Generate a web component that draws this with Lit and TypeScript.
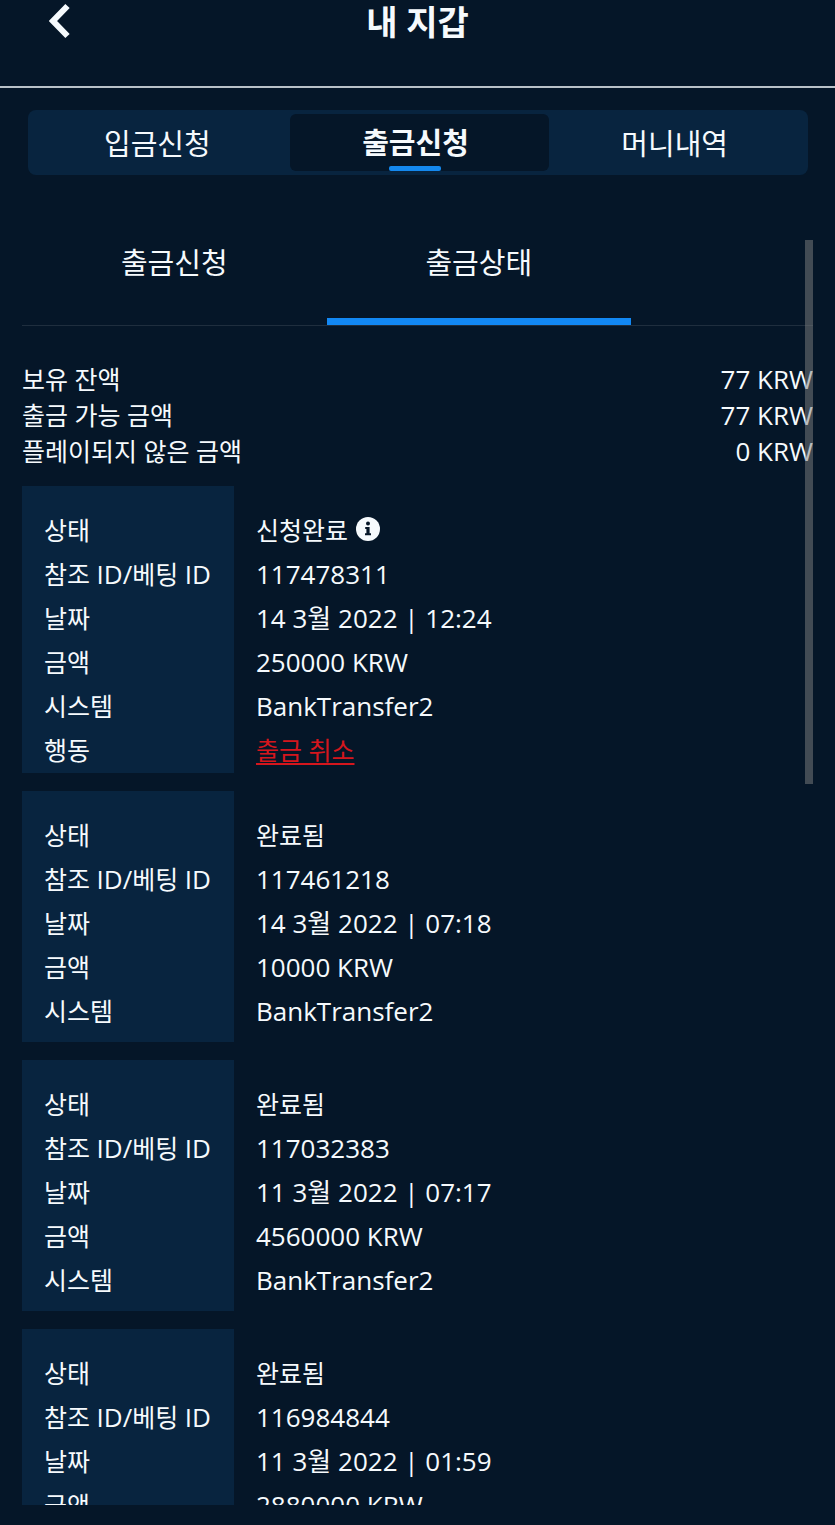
import { LitElement, html, css, svg, nothing } from "lit";
import { customElement, property, state } from "lit/decorators.js";
import { classMap } from "lit/directives/class-map.js";

interface Withdrawal {
  id: string;
  status: string;
  date: string;
  amount: string;
  system?: string;
  cancellable?: boolean;
}

const WITHDRAWALS: Withdrawal[] = [
  { id: "117478311", status: "신청완료", date: "14 3월 2022 | 12:24", amount: "250000 KRW", system: "BankTransfer2", cancellable: true },
  { id: "117461218", status: "완료됨", date: "14 3월 2022 | 07:18", amount: "10000 KRW", system: "BankTransfer2" },
  { id: "117032383", status: "완료됨", date: "11 3월 2022 | 07:17", amount: "4560000 KRW", system: "BankTransfer2" },
  { id: "116984844", status: "완료됨", date: "11 3월 2022 | 01:59", amount: "2880000 KRW" },
];

const BALANCES = [
  { label: "보유 잔액", value: "77 KRW" },
  { label: "출금 가능 금액", value: "77 KRW" },
  { label: "플레이되지 않은 금액", value: "0 KRW" },
];

const infoIcon = svg`
  <svg class="icon" viewBox="0 0 24 24" aria-hidden="true">
    <circle cx="12" cy="12" r="12" fill="currentColor"></circle>
    <g fill="#051628">
      <circle cx="12" cy="6.6" r="2"></circle>
      <path d="M9.2 10h4.4v6.2h1.4v2H9v-2h1.4V12H9.2z"></path>
    </g>
  </svg>`;

@customElement("withdrawal-record")
export class WithdrawalRecord extends LitElement {
  @property({ attribute: false }) record!: Withdrawal;

  static styles = css`
    :host {
      display: block;
    }
    .record {
      --label-width: 212px;
      display: grid;
      grid-template-columns: var(--label-width) 1fr;
      grid-auto-rows: 44px;
      align-items: center;
      margin: 0;
      padding: 22px 0 9px;
      line-height: 44px;
      background: linear-gradient(to right, #08243f var(--label-width), transparent var(--label-width));
    }
    .record.open {
      padding-bottom: 1px;
    }
    .label {
      padding-left: 22px;
      white-space: nowrap;
      font-size: 25px;
    }
    .latin {
      font-size: 26px;
    }
    .value {
      margin: 0;
      padding-left: 22px;
    }
    .status {
      display: flex;
      align-items: center;
      gap: 8px;
      font-size: 25px;
    }
    .info {
      display: flex;
      padding: 0 0 3px;
      border: 0;
      background: none;
      color: inherit;
      cursor: pointer;
    }
    .icon {
      width: 24px;
      height: 24px;
    }
    .cancel {
      font-size: 25px;
      color: #d5161d;
      text-decoration-thickness: 2px;
      text-underline-offset: 3px;
    }
  `;

  render() {
    const r = this.record;
    return html`
      <dl class=${classMap({ record: true, open: !!r.cancellable })}>
        <dt class="label">상태</dt>
        <dd class="value status">
          <span>${r.status}</span>
          ${r.cancellable
            ? html`<button class="info" type="button" aria-label="상태 정보">${infoIcon}</button>`
            : nothing}
        </dd>
        <dt class="label">참조 <span class="latin">ID/</span>베팅 <span class="latin">ID</span></dt>
        <dd class="value">${r.id}</dd>
        <dt class="label">날짜</dt>
        <dd class="value">${r.date}</dd>
        <dt class="label">금액</dt>
        <dd class="value">${r.amount}</dd>
        ${r.system
          ? html`<dt class="label">시스템</dt>
              <dd class="value">${r.system}</dd>`
          : nothing}
        ${r.cancellable
          ? html`<dt class="label">행동</dt>
              <dd class="value"><a class="cancel" href="#cancel">출금 취소</a></dd>`
          : nothing}
      </dl>
    `;
  }
}

@customElement("app-root")
export class AppRoot extends LitElement {
  @state() private section = 1;
  @state() private view = 1;

  static styles = css`
    :host {
      display: flex;
      flex-direction: column;
      box-sizing: border-box;
      height: 100vh;
      padding-bottom: 20px;
      background: #051628;
      color: #f6fafd;
      font-family: "Open Sans", "Noto Sans CJK KR", sans-serif;
      font-size: 26px;
    }
    button {
      margin: 0;
      padding: 0;
      border: 0;
      background: none;
      color: inherit;
      font: inherit;
      cursor: pointer;
    }
    .header {
      display: grid;
      grid-template-columns: 70px 1fr 70px;
      align-items: start;
      box-sizing: border-box;
      height: 88px;
      flex: none;
      border-bottom: 2px solid #b9c1c8;
    }
    .back {
      display: flex;
      justify-content: flex-end;
      padding-top: 3px;
    }
    .chevron {
      width: 21px;
      height: 36px;
    }
    .title {
      margin: 0;
      font-size: 34px;
      font-weight: 700;
      line-height: 44px;
      text-align: center;
    }
    .sections {
      display: grid;
      grid-template-columns: repeat(3, 1fr);
      flex: none;
      height: 65px;
      margin: 22px 27px 0 28px;
      padding-right: 4px;
      box-sizing: border-box;
      border-radius: 8px;
      background: #08243f;
      font-size: 29px;
    }
    .section {
      padding-bottom: 2px;
    }
    .section.active {
      display: flex;
      flex-direction: column;
      align-items: center;
      justify-content: flex-end;
      margin: 4px -4px 4px 3px;
      padding: 0 8px 0 0;
      border-radius: 6px;
      background: #051628;
      font-weight: 700;
      line-height: 46px;
    }
    .section.active::after {
      content: "";
      width: 52px;
      height: 5px;
      border-radius: 2px;
      background: #1488ee;
    }
    .panel {
      position: relative;
      display: flex;
      flex: 1;
      min-height: 0;
      margin: 65px 22px 0;
    }
    .scroller {
      flex: 1;
      overflow-y: auto;
      scrollbar-width: none;
    }
    .thumb {
      position: absolute;
      top: 0;
      right: 0;
      width: 8px;
      height: 43%;
      background: rgba(128, 128, 128, 0.5);
      pointer-events: none;
    }
    .views {
      display: flex;
      border-bottom: 1px solid #1f2e3e;
      font-size: 29px;
    }
    .view {
      box-sizing: border-box;
      flex: 0 0 38.5%;
      height: 85px;
      padding-bottom: 32px;
      border-bottom: 7px solid transparent;
      line-height: 44px;
    }
    .view.active {
      border-bottom-color: #1288f4;
    }
    .balances {
      margin: 35px 0 17px;
      line-height: 36px;
    }
    .balance {
      display: flex;
      justify-content: space-between;
    }
    .balance-label {
      font-size: 25px;
    }
    .balance-value {
      margin: 0;
    }
    .records {
      display: grid;
      gap: 18px;
    }
  `;

  render() {
    return html`
      <header class="header">
        <button class="back" type="button" aria-label="뒤로">
          <svg class="chevron" viewBox="0 0 21 36" aria-hidden="true">
            <path d="M18.5 3L4 18l14.5 15" fill="none" stroke="currentColor" stroke-width="6"></path>
          </svg>
        </button>
        <h1 class="title">내 지갑</h1>
      </header>
      <nav class="sections">
        ${["입금신청", "출금신청", "머니내역"].map(
          (name, i) => html`<button
            type="button"
            class=${classMap({ section: true, active: this.section === i })}
            @click=${() => (this.section = i)}
          >${name}</button>`,
        )}
      </nav>
      <main class="panel">
        <div class="scroller">
          <div class="views">
            ${["출금신청", "출금상태"].map(
              (name, i) => html`<button
                type="button"
                class=${classMap({ view: true, active: this.view === i })}
                @click=${() => (this.view = i)}
              >${name}</button>`,
            )}
          </div>
          <dl class="balances">
            ${BALANCES.map(
              (b) => html`<div class="balance">
                <dt class="balance-label">${b.label}</dt>
                <dd class="balance-value">${b.value}</dd>
              </div>`,
            )}
          </dl>
          <div class="records">
            ${WITHDRAWALS.map((w) => html`<withdrawal-record .record=${w}></withdrawal-record>`)}
          </div>
        </div>
        <div class="thumb"></div>
      </main>
    `;
  }
}
